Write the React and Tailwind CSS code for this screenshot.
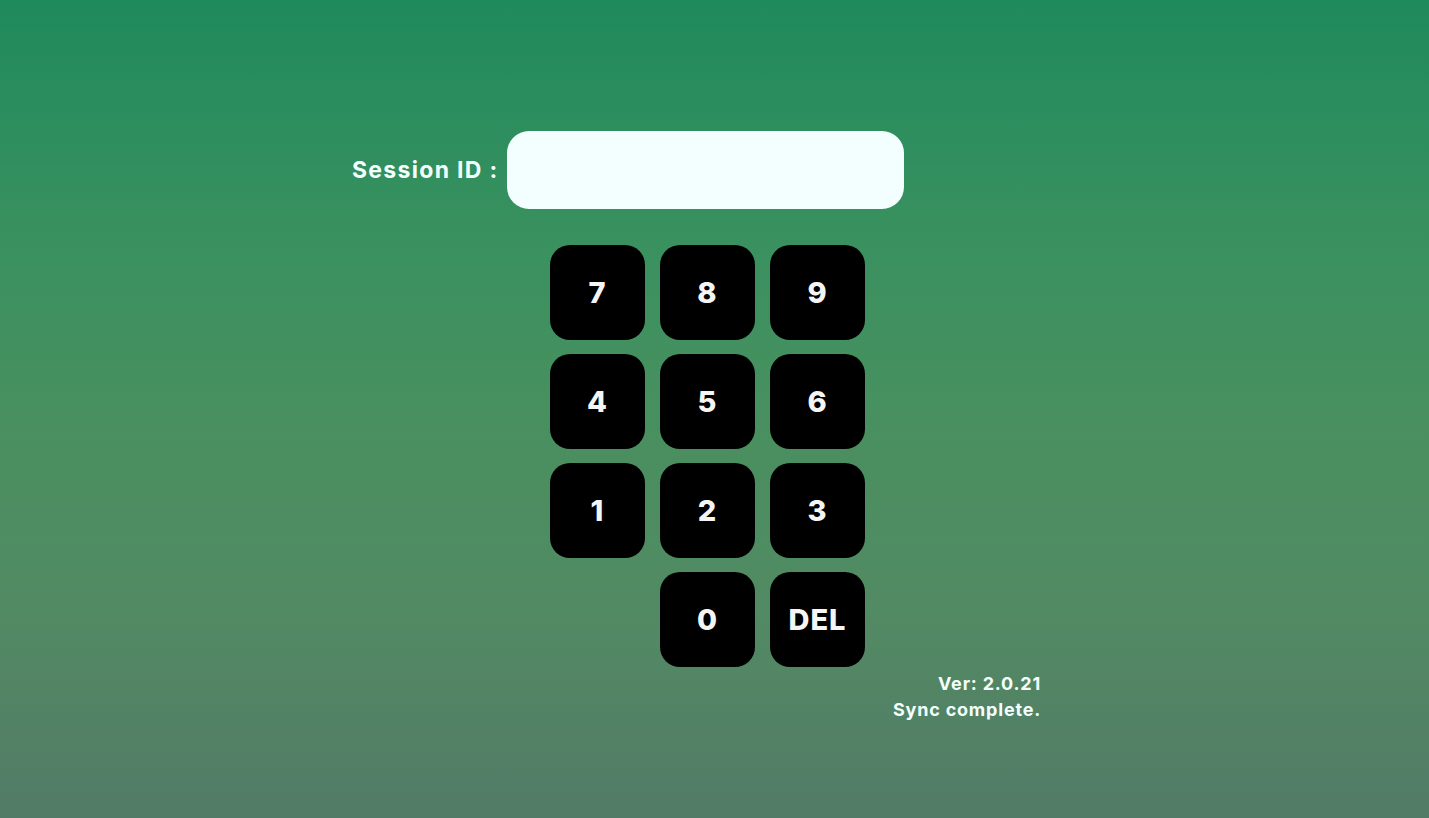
import React from "react";

const keys = [
  ["7", "8", "9"],
  ["4", "5", "6"],
  ["1", "2", "3"],
  ["", "0", "DEL"],
];

export default function App() {
  return (
    <div
      className="w-full h-[818px] overflow-hidden bg-[linear-gradient(180deg,#1f8a5c_0%,#3a915f_30%,#48905f_50%,#528a63_75%,#527b67_100%)] text-white"
      style={{ fontFamily: "Inter, 'Noto Sans', sans-serif" }}
    >
      <div className="flex flex-col pl-[352px] pt-[131px]">
        <div className="flex items-center gap-[5px]">
          <span className="w-[150px] text-[23px] font-bold tracking-[1.3px] whitespace-nowrap text-[#f3fffe]">
            Session ID :
          </span>
          <div className="w-[397px] h-[78px] rounded-[22px] bg-[#f3fffe]" />
        </div>
        <div className="ml-[198px] mt-[36px] grid grid-cols-[95px_95px_95px] auto-rows-[95px] gap-x-[15px] gap-y-[14px] w-fit">
          {keys.flat().map((k, i) =>
            k === "" ? (
              <div key={i} />
            ) : (
              <div
                key={i}
                className="flex items-center justify-center rounded-[20px] bg-black text-[#f5f5f5] font-extrabold text-[29px] tracking-[1px]"
              >
                {k}
              </div>
            )
          )}
        </div>
        <div className="w-[689px] mt-[4px] text-right text-[18px] leading-[26px] font-bold tracking-[0.8px] text-[#f3fffe]">
          <div>Ver: 2.0.21</div>
          <div>Sync complete.</div>
        </div>
      </div>
    </div>
  );
}
